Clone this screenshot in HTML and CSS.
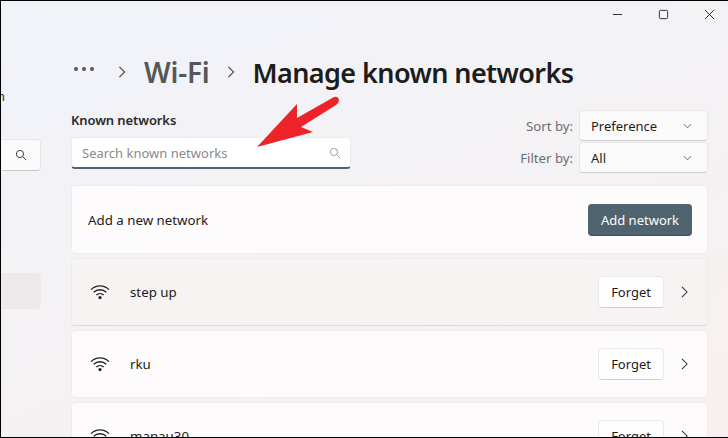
FILE: index.html
```html
<!DOCTYPE html>
<html lang="en">
<head>
  <meta charset="UTF-8" />
  <title>Manage known networks</title>
  <link rel="stylesheet" href="styles.css">
</head>
<body>
  <div class="window">
    <div class="titlebar">
      <svg class="win-icon" viewBox="0 0 12 12"><path d="M1 6h10" /></svg>
      <svg class="win-icon" viewBox="0 0 12 12"><rect x="1.5" y="1.5" width="9" height="9" rx="1.2" /></svg>
      <svg class="win-icon" viewBox="0 0 12 12"><path d="M1 1l10 10M11 1L1 11" /></svg>
    </div>
    <div class="layout">
      <div class="sidebar">
        <span class="side-text">n</span>
        <div class="side-search">
          <svg class="search-icon dark" viewBox="0 0 14 14"><circle cx="5.8" cy="5.8" r="4.2" /><path d="M8.9 8.9l4 4" /></svg>
        </div>
        <div class="side-active"></div>
      </div>
      <div class="main">
        <div class="breadcrumb">
          <span class="dots"><i></i><i></i><i></i></span>
          <svg class="crumb-sep" viewBox="0 0 8 14"><path d="M1 1l6 6-6 6" /></svg>
          <span class="crumb">Wi-Fi</span>
          <svg class="crumb-sep" viewBox="0 0 8 14"><path d="M1 1l6 6-6 6" /></svg>
          <span class="crumb current">Manage known networks</span>
        </div>
        <div class="toolbar">
          <div class="search-col">
            <div class="section-title">Known networks</div>
            <div class="search-box">
              <span>Search known networks</span>
              <svg class="search-icon" viewBox="0 0 14 14"><circle cx="5.8" cy="5.8" r="4.2" /><path d="M8.9 8.9l4 4" /></svg>
            </div>
          </div>
          <div class="filters">
            <div class="filter-row">
              <span class="filter-label">Sort by:</span>
              <div class="select"><span>Preference</span><svg class="select-arrow" viewBox="0 0 10 6"><path d="M1 1l4 4 4-4" /></svg></div>
            </div>
            <div class="filter-row">
              <span class="filter-label">Filter by:</span>
              <div class="select"><span>All</span><svg class="select-arrow" viewBox="0 0 10 6"><path d="M1 1l4 4 4-4" /></svg></div>
            </div>
          </div>
        </div>
        <div class="cards">
          <div class="card add">
            <span class="card-name">Add a new network</span>
            <button class="btn primary">Add network</button>
          </div>
          <div class="card hover">
            <svg class="wifi" viewBox="0 0 20 16"><path d="M1 5.6a12.8 12.8 0 0 1 18 0M3.7 8.3a9 9 0 0 1 12.6 0M6.4 11a5.2 5.2 0 0 1 7.2 0" /><circle cx="10" cy="13.6" r="1.6" /></svg>
            <span class="network">step up</span>
            <button class="btn">Forget</button>
            <svg class="chevron" viewBox="0 0 8 14"><path d="M1 1l6 6-6 6" /></svg>
          </div>
          <div class="card">
            <svg class="wifi" viewBox="0 0 20 16"><path d="M1 5.6a12.8 12.8 0 0 1 18 0M3.7 8.3a9 9 0 0 1 12.6 0M6.4 11a5.2 5.2 0 0 1 7.2 0" /><circle cx="10" cy="13.6" r="1.6" /></svg>
            <span class="network">rku</span>
            <button class="btn">Forget</button>
            <svg class="chevron" viewBox="0 0 8 14"><path d="M1 1l6 6-6 6" /></svg>
          </div>
          <div class="card">
            <svg class="wifi" viewBox="0 0 20 16"><path d="M1 5.6a12.8 12.8 0 0 1 18 0M3.7 8.3a9 9 0 0 1 12.6 0M6.4 11a5.2 5.2 0 0 1 7.2 0" /><circle cx="10" cy="13.6" r="1.6" /></svg>
            <span class="network">manau30</span>
            <button class="btn">Forget</button>
            <svg class="chevron" viewBox="0 0 8 14"><path d="M1 1l6 6-6 6" /></svg>
          </div>
        </div>
      </div>
    </div>
    <svg class="red-arrow" viewBox="0 0 728 438"><path d="M257 147 L297 104 L297 118 L334 97 Q338 96 339 100 Q339 103 336 105 L301 127 L313 132 Z" /></svg>
  </div>
</body>
</html>
```

FILE: styles.css
```css
* { box-sizing: border-box; }
html, body {
  margin: 0;
  height: 100%;
  overflow: hidden;
}
body {
  font-family: "Noto Sans", "Open Sans", sans-serif;
  color: #1c1c1c;
}
.window {
  position: relative;
  width: 728px;
  height: 438px;
  overflow: hidden;
  border: solid #000;
  border-width: 1px 0 1px 1px;
  background: linear-gradient(160deg, #f0f3f9 0%, #f4f2f5 45%, #f8f0ee 100%);
}

/* title bar */
.titlebar {
  display: flex;
  justify-content: flex-end;
  align-items: center;
  gap: 35px;
  height: 26px;
  padding: 0 13px 0 0;
}
.win-icon {
  width: 11px;
  height: 11px;
  fill: none;
  stroke: #222;
  stroke-width: 1;
}

.layout { display: flex; }

/* clipped sidebar */
.sidebar {
  width: 40px;
  flex: none;
  display: flex;
  flex-direction: column;
  align-items: stretch;
  margin-right: 30px;
}
.side-text {
  font-size: 13px;
  line-height: 18px;
  margin: 60px 0 0 -4px;
  height: 18px;
  color: #333;
}
.side-search {
  display: flex;
  justify-content: flex-end;
  align-items: center;
  height: 32px;
  margin-top: 34px;
  margin-left: -8px;
  padding-right: 13px;
  background: #fbfafb;
  border: 1px solid #e8e5e6;
  border-bottom-color: #c9c8c9;
  border-radius: 4px;
}
.side-active {
  height: 36px;
  margin-top: 102px;
  margin-left: -8px;
  background: #ede9ea;
  border-radius: 4px;
}

.main { width: 637px; flex: none; }

/* breadcrumb */
.breadcrumb {
  display: flex;
  align-items: center;
  height: 40px;
  margin-top: 25px;
}
.dots {
  display: flex;
  gap: 4px;
  margin: 0 0 6px 3px;
}
.dots i {
  width: 4px;
  height: 4px;
  border-radius: 50%;
  background: #555;
}
.crumb-sep {
  width: 8px;
  height: 12px;
  margin: 0 18px 0 24px;
  fill: none;
  stroke: #555;
  stroke-width: 1.5;
}
.crumb {
  font-size: 28px;
  font-weight: 600;
  color: #575757;
  letter-spacing: -0.2px;
}
.crumb.current {
  font-size: 27px;
  color: #1c1c1c;
  letter-spacing: -0.6px;
}
.crumb + .crumb-sep { margin-left: 17px; margin-right: 18px; }

/* search and filters */
.toolbar {
  display: flex;
  justify-content: space-between;
  height: 76px;
  margin-top: 17px;
}
.search-col { padding-top: 2px; }
.section-title {
  font-size: 13px;
  font-weight: 600;
  line-height: 18px;
  color: #2a2a2a;
  letter-spacing: -0.1px;
}
.search-box {
  display: flex;
  justify-content: space-between;
  align-items: center;
  width: 280px;
  height: 32px;
  margin-top: 8px;
  padding: 0 9px 0 10px;
  background: #fff;
  border: 1px solid #eceaeb;
  border-bottom: 2px solid #4f6472;
  border-radius: 4px;
  font-size: 13px;
  color: #8a8a8a;
}
.search-icon {
  width: 12px;
  height: 12px;
  fill: none;
  stroke: #9a9a9a;
  stroke-width: 1.1;
}
.search-icon.dark { stroke: #333; }
.filters {
  display: flex;
  flex-direction: column;
  gap: 1px;
  padding: 1px 0 0;
}
.filter-row {
  display: flex;
  align-items: center;
  justify-content: flex-end;
  gap: 6px;
}
.filter-label {
  font-size: 13.2px;
  color: #6d6d6d;
}
.select {
  display: flex;
  justify-content: space-between;
  align-items: center;
  width: 129px;
  height: 31px;
  padding: 0 15px 0 11px;
  background: #fbfafb;
  border: 1px solid #e9e6e7;
  border-bottom-color: #cfcdce;
  border-radius: 4px;
  font-size: 13px;
}
.select-arrow {
  width: 9px;
  height: 6px;
  fill: none;
  stroke: #555;
  stroke-width: 1;
}

/* network cards */
.cards {
  display: flex;
  flex-direction: column;
  gap: 4px;
}
.card {
  display: flex;
  align-items: center;
  flex: none;
  height: 68px;
  padding: 0 15px 0 16px;
  background: #fdfbfc;
  border: 1px solid #efebec;
  border-radius: 4px;
}
.card.add { height: 69px; }
.card.hover {
  background: #f6f3f2;
  border-bottom-color: #dfdbdb;
}
.card-name {
  flex: 1;
  font-size: 13.3px;
}
.network {
  flex: 1;
  margin-left: 20px;
  font-size: 13.3px;
}
.wifi {
  width: 20px;
  height: 16px;
  margin-left: 2px;
  flex: none;
  fill: none;
  stroke: #222;
  stroke-width: 1.3;
}
.wifi circle { fill: #222; stroke: none; }
.btn {
  height: 32px;
  padding: 0 12px;
  font-family: inherit;
  font-size: 13px;
  color: #1c1c1c;
  background: #fefefe;
  border: 1px solid #ebe8e9;
  border-bottom-color: #d2d0d1;
  border-radius: 4px;
}
.btn.primary {
  width: 104px;
  padding: 0;
  color: #fff;
  background: #4f6370;
  border-color: #4f6370;
  border-bottom-color: #3e4f5a;
}
.chevron {
  width: 7px;
  height: 12px;
  margin: 0 4px 0 17px;
  fill: none;
  stroke: #333;
  stroke-width: 1.2;
}

/* annotation drawn over the screenshot */
.red-arrow {
  position: absolute;
  top: -1px;
  left: -1px;
  width: 728px;
  height: 438px;
  fill: #ee2229;
}
```
